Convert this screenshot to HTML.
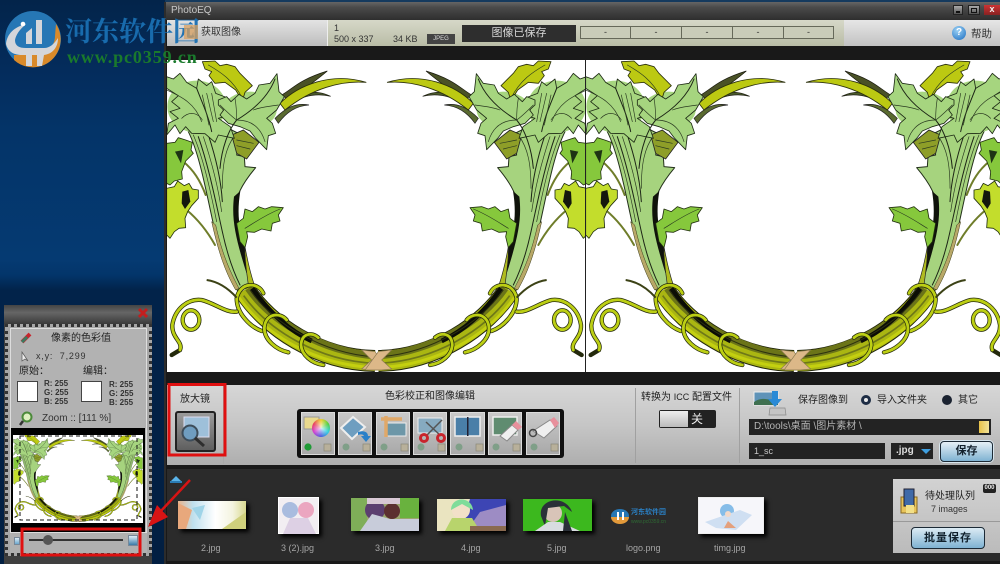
<!DOCTYPE html>
<html><head><meta charset="utf-8">
<style>
html,body{margin:0;padding:0;width:1000px;height:564px;overflow:hidden;background:#04264c;}
body{position:relative;font-family:"Liberation Sans","Noto Sans CJK SC",sans-serif;}
.b{position:absolute;box-sizing:border-box;}
.t{position:absolute;white-space:nowrap;font-size:10px;line-height:14px;color:#222;}
svg{position:absolute;left:0;top:0;}
.lf{fill:#a6d57f;stroke:#1d2a14;stroke-width:2.5;stroke-linejoin:round}
.yl{fill:#bcc912;stroke:#2b300c;stroke-width:2.5;stroke-linejoin:round}
.br{fill:#86c83c;stroke:#22300f;stroke-width:2.5;stroke-linejoin:round}
.lm{fill:#c3dd2c;stroke:#22300f;stroke-width:2.5;stroke-linejoin:round}
.dk{fill:none;stroke:#1c2415;stroke-width:3;stroke-linecap:round}
.vn{fill:none;stroke:#2a3a20;stroke-width:2;stroke-linecap:round}
.tk{fill:none;stroke:#24290c;stroke-width:13;stroke-linecap:round}
.tn{fill:none;stroke:#bccf14;stroke-width:8.5;stroke-linecap:round}
.ol{fill:none;stroke:#6f7d2a;stroke-width:6;stroke-linecap:round}
.tile{position:absolute;background:linear-gradient(#c9c9c9,#a9a9a9);top:412px;height:43px;box-sizing:border-box;border:1px solid #dcdcdc;}
.lb{position:absolute;white-space:nowrap;top:541px;color:#a5a5a5;font-size:9px;line-height:14px;}
</style></head>
<body>
<!-- Desktop -->
<div class="b" style="left:0;top:0;width:165px;height:564px;background:linear-gradient(180deg,#03244a 0,#042c5c 70px,#043468 130px,#053a72 260px,#03356a 275px,#02234a 290px,#021f42 564px);"></div>
<div class="b" style="left:560px;top:0;width:240px;height:2px;background:#777;"></div>
<div class="b" style="left:165px;top:0;width:835px;height:2px;background:#153a5e;"></div>

<!-- Window -->
<div class="b" style="left:164px;top:2px;width:836px;height:562px;background:#191919;border-left:2px solid #2c2c2c;"></div>
<div class="b" style="left:166px;top:2px;width:834px;height:18px;background:linear-gradient(#666 0,#4a4a4a 30%,#2e2e2e 100%);"></div>
<div class="t" style="left:171px;top:4px;color:#c9c9c9;font-size:10px;">PhotoEQ</div>
<div class="b" style="left:953px;top:5px;width:10px;height:10px;background:linear-gradient(#aaa,#555);border:1px solid #222;"></div>
<div class="b" style="left:956px;top:11px;width:4px;height:2px;background:#111;"></div>
<div class="b" style="left:968px;top:5px;width:12px;height:10px;background:linear-gradient(#aaa,#555);border:1px solid #222;"></div>
<div class="b" style="left:971px;top:8px;width:6px;height:5px;border:1px solid #111;"></div>
<div class="b" style="left:984px;top:5px;width:16px;height:10px;background:linear-gradient(#c33,#822);text-align:center;color:#eee;font-size:9px;font-weight:bold;line-height:9px;">x</div>

<!-- Toolbar -->
<div class="b" style="left:167px;top:20px;width:160px;height:26px;background:linear-gradient(#e3e3e3,#bdbdbd);"></div>
<div class="b" style="left:327px;top:20px;width:517px;height:26px;background:linear-gradient(#d6d8c8,#b9bca6);border-left:1px solid #eee;"></div>
<div class="b" style="left:844px;top:20px;width:156px;height:26px;background:linear-gradient(#e6e6e6,#c2c2c2);"></div>
<div class="t" style="left:201px;top:26px;color:#333;">获取图像</div>
<div class="t" style="left:334px;top:21px;font-size:9px;color:#333;">1</div>
<div class="t" style="left:334px;top:32px;font-size:9px;color:#333;">500 x 337</div>
<div class="t" style="left:393px;top:32px;font-size:9px;color:#333;">34 KB</div>
<div class="b" style="left:427px;top:34px;width:28px;height:10px;background:#444;color:#ddd;font-size:6px;line-height:10px;text-align:center;">JPEG</div>
<div class="b" style="left:462px;top:25px;width:114px;height:17px;background:#2e2e2e;color:#d8d8d8;font-size:11px;line-height:16px;text-align:center;">图像已保存</div>
<div class="b" style="left:580px;top:26px;width:51px;height:13px;border:1px solid #66695a;background:#c9ccb9;color:#333;font-size:9px;line-height:10px;text-align:center;">-</div>
<div class="b" style="left:631px;top:26px;width:51px;height:13px;border:1px solid #66695a;border-left:0;background:#c9ccb9;color:#333;font-size:9px;line-height:10px;text-align:center;">-</div>
<div class="b" style="left:682px;top:26px;width:51px;height:13px;border:1px solid #66695a;border-left:0;background:#c9ccb9;color:#333;font-size:9px;line-height:10px;text-align:center;">-</div>
<div class="b" style="left:733px;top:26px;width:51px;height:13px;border:1px solid #66695a;border-left:0;background:#c9ccb9;color:#333;font-size:9px;line-height:10px;text-align:center;">-</div>
<div class="b" style="left:784px;top:26px;width:50px;height:13px;border:1px solid #66695a;border-left:0;background:#c9ccb9;color:#333;font-size:9px;line-height:10px;text-align:center;">-</div>
<div class="b" style="left:952px;top:26px;width:14px;height:14px;border-radius:50%;background:radial-gradient(circle at 40% 30%,#9cd2f5,#1a6cc0);color:#fff;font-size:10px;font-weight:bold;line-height:14px;text-align:center;">?</div>
<div class="t" style="left:971px;top:27px;color:#333;font-size:10.5px;">帮助</div>

<!-- Image area -->
<div class="b" style="left:167px;top:60px;width:833px;height:312px;background:#fff;"></div>

<!-- Control panel -->
<div class="b" style="left:167px;top:385px;width:833px;height:80px;background:linear-gradient(#d6d6d6,#c6c6c6 50%,#aeaeae);"></div>
<div class="b" style="left:223px;top:386px;width:1px;height:78px;background:#aaa;"></div>
<div class="b" style="left:635px;top:388px;width:1px;height:75px;background:#a0a0a0;"></div>
<div class="b" style="left:739px;top:388px;width:1px;height:75px;background:#a0a0a0;"></div>
<div class="t" style="left:180px;top:393px;color:#222;">放大镜</div>
<div class="b" style="left:175px;top:411px;width:41px;height:41px;background:linear-gradient(#9b9b9b,#5f5f5f);border:2px solid #222;border-radius:3px;"></div>
<div class="t" style="left:385px;top:390px;color:#222;">色彩校正和图像编辑</div>

<div class="b" style="left:297px;top:409px;width:267px;height:49px;background:#111;border-radius:3px;"></div>
<div class="tile" style="left:301px;width:34px;"></div>
<div class="tile" style="left:338px;width:34px;"></div>
<div class="tile" style="left:376px;width:34px;"></div>
<div class="tile" style="left:413px;width:34px;"></div>
<div class="tile" style="left:450px;width:35px;"></div>
<div class="tile" style="left:488px;width:34px;"></div>
<div class="tile" style="left:526px;width:34px;"></div>

<div class="t" style="left:641px;top:390px;color:#222;">转换为 <span style="font-size:9px">ICC</span> 配置文件</div>
<div class="b" style="left:659px;top:410px;width:57px;height:18px;background:#222;border-radius:2px;"></div>
<div class="b" style="left:660px;top:411px;width:28px;height:16px;background:linear-gradient(#eee,#bbb);"></div>
<div class="t" style="left:691px;top:412px;color:#eee;font-size:12px;">关</div>

<div class="t" style="left:798px;top:394px;color:#222;">保存图像到</div>
<div class="b" style="left:861px;top:395px;width:10px;height:10px;border-radius:50%;background:#e8e8e8;border:3px solid #1d2c44;"></div>
<div class="t" style="left:877px;top:394px;color:#222;">导入文件夹</div>
<div class="b" style="left:942px;top:395px;width:10px;height:10px;border-radius:50%;background:#1a2230;"></div>
<div class="t" style="left:958px;top:394px;color:#222;">其它</div>
<div class="b" style="left:749px;top:419px;width:242px;height:16px;background:#232323;"></div>
<div class="t" style="left:754px;top:420px;color:#b5b5b5;font-size:10px;">D:\tools\桌面 \图片素材 \</div>
<div class="b" style="left:979px;top:421px;width:10px;height:12px;background:linear-gradient(90deg,#e8c24a,#f3e39a);"></div>
<div class="b" style="left:749px;top:443px;width:136px;height:16px;background:#232323;"></div>
<div class="t" style="left:754px;top:444px;color:#c8c8c8;font-size:9px;">1_sc</div>
<div class="b" style="left:891px;top:443px;width:42px;height:16px;background:#232323;"></div>
<div class="t" style="left:896px;top:444px;color:#ddd;font-size:10px;font-weight:bold;">.jpg</div>
<div class="b" style="left:940px;top:441px;width:53px;height:21px;border-radius:4px;background:linear-gradient(#e6f0f6,#7fb2d2);border:1px solid #1c2a36;color:#12202c;font-size:11px;font-weight:bold;line-height:19px;text-align:center;box-shadow:0 0 0 1px #d8e6ee;">保存</div>

<!-- Thumb strip -->
<div class="b" style="left:167px;top:469px;width:833px;height:92px;background:#2b2b2b;"></div>
<div class="lb" style="left:201px;">2.jpg</div>
<div class="lb" style="left:281px;">3 (2).jpg</div>
<div class="lb" style="left:375px;">3.jpg</div>
<div class="lb" style="left:461px;">4.jpg</div>
<div class="lb" style="left:547px;">5.jpg</div>
<div class="lb" style="left:626px;">logo.png</div>
<div class="lb" style="left:714px;">timg.jpg</div>

<!-- Thumbnails -->
<div class="b" style="left:178px;top:501px;width:68px;height:28px;background:linear-gradient(90deg,#e8b48c 0,#bfe0ee 22%,#fff 55%,#f4f4e0 80%,#d8d890 100%);box-shadow:3px 3px 4px #000;"></div>
<div class="b" style="left:278px;top:497px;width:41px;height:37px;background:#f2eef2;border:1px solid #fff;box-shadow:3px 3px 4px #000;"></div>
<div class="b" style="left:351px;top:498px;width:68px;height:33px;background:#9aa66c;box-shadow:3px 3px 4px #000;"></div>
<div class="b" style="left:437px;top:499px;width:69px;height:32px;background:linear-gradient(#4a6ad0,#a8a0d8);box-shadow:3px 3px 4px #000;"></div>
<div class="b" style="left:523px;top:499px;width:69px;height:32px;background:#3cb81e;box-shadow:3px 3px 4px #000;"></div>
<div class="b" style="left:698px;top:497px;width:66px;height:37px;background:#f6f6fa;border:1px solid #eee;box-shadow:3px 3px 4px #000;"></div>
<div class="t" style="left:631px;top:506px;color:#2b7fc2;font-size:7px;font-weight:bold;">河东软件园</div>
<div class="t" style="left:631px;top:515px;color:#2e6b34;font-size:5px;">www.pc0359.cn</div>

<!-- Queue -->
<div class="b" style="left:893px;top:479px;width:107px;height:74px;background:linear-gradient(#d2d2d2,#bbbbbb);"></div>
<div class="b" style="left:893px;top:521px;width:107px;height:1px;background:#999;"></div>
<div class="b" style="left:983px;top:484px;width:13px;height:9px;background:#222;border-radius:2px;color:#eee;font-size:6px;line-height:9px;text-align:center;font-weight:bold;">000</div>
<div class="t" style="left:925px;top:490px;color:#222;">待处理队列</div>
<div class="t" style="left:931px;top:502px;color:#333;font-size:9px;">7 images</div>
<div class="b" style="left:911px;top:527px;width:74px;height:22px;border-radius:4px;background:linear-gradient(#dcebf4,#7fb2d2);border:1px solid #1c2a36;color:#10202c;font-size:11px;font-weight:bold;line-height:20px;text-align:center;letter-spacing:1px;">批量保存</div>

<!-- Pixel panel -->
<div class="b" style="left:4px;top:305px;width:148px;height:259px;background:#3f3f3f;"></div>
<div class="b" style="left:4px;top:305px;width:148px;height:19px;background:linear-gradient(#444,#666 40%,#3a3a3a);"></div>
<div class="b" style="left:5px;top:324px;width:147px;height:232px;border:3px dotted #333;background:#a6a6a6;"></div>
<div class="b" style="left:10px;top:328px;width:137px;height:205px;background:#b2b2b2;border:1px solid #ddd;"></div>
<div class="t" style="left:51px;top:332px;color:#222;">像素的色彩值</div>
<div class="t" style="left:36px;top:349px;color:#333;font-size:9px;letter-spacing:.8px;">x,y:&nbsp; 7,299</div>
<div class="t" style="left:19px;top:365px;color:#222;">原始：</div>
<div class="t" style="left:83px;top:365px;color:#222;">编辑：</div>
<div class="b" style="left:17px;top:381px;width:21px;height:21px;background:#fff;border:1px solid #444;"></div>
<div class="b" style="left:81px;top:381px;width:21px;height:21px;background:#fff;border:1px solid #444;"></div>
<div class="t" style="left:44px;top:379px;font-size:8px;line-height:9px;font-weight:bold;color:#333;">R: 255<br>G: 255<br>B: 255</div>
<div class="t" style="left:109px;top:380px;font-size:8px;line-height:9px;font-weight:bold;color:#333;">R: 255<br>G: 255<br>B: 255</div>
<div class="t" style="left:42px;top:412px;color:#333;font-size:10px;">Zoom :: [111 %]</div>
<div class="b" style="left:11px;top:428px;width:134px;height:104px;background:#000;"></div>
<div class="b" style="left:13px;top:435px;width:130px;height:88px;background:#fff;"></div>
<div class="b" style="left:10px;top:533px;width:137px;height:20px;background:#b0b0b0;"></div>
<div class="b" style="left:29px;top:539px;width:94px;height:2px;background:#333;"></div>
<div class="b" style="left:43px;top:535px;width:10px;height:10px;border-radius:50%;background:#555;"></div>
<div class="b" style="left:14px;top:537px;width:6px;height:8px;background:linear-gradient(#dfeef8,#6aa6cc);border:1px solid #789;"></div>
<div class="b" style="left:128px;top:535px;width:10px;height:11px;background:linear-gradient(#dfeef8,#3a7ca8);border:1px solid #789;"></div>

<svg width="1000" height="564" viewBox="0 0 1000 564">
<defs>
<clipPath id="c1"><rect x="167" y="60" width="418" height="312"/></clipPath>
<clipPath id="c2"><rect x="586" y="60" width="414" height="312"/></clipPath>
<clipPath id="c3"><rect x="13" y="435" width="130" height="88"/></clipPath>
<g id="half">
<!-- top stems -->
<path d="M330,190 C360,160 390,142 432,150 C395,152 365,170 340,205Z" fill="#5a6a30" stroke="#222" stroke-width="2"/>
<path d="M350,120 C385,100 400,75 487,48 C450,80 420,100 370,135Z" fill="#4a5226" stroke="#1a1a10" stroke-width="2"/>
<path d="M365,130 C400,115 450,100 497,124 C450,112 410,125 375,145Z" fill="#4a5a2a" stroke="#1a1a10" stroke-width="2"/>
<path class="yl" d="M345,145 C400,90 500,50 603,82 C530,76 440,100 360,165Z"/>
<!-- side branches -->
<path class="ol" d="M55,320 C85,345 105,375 122,420"/>
<path class="ol" d="M65,465 C95,490 125,525 150,570"/>
<!-- side leaves -->
<path class="br" d="M5,265 L30,262 L40,248 L62,255 L82,262 L78,285 L85,295 L62,318 L50,350 L52,372 L28,378 L15,390 L5,385Z"/>
<path class="lm" d="M5,400 L28,395 L38,378 L58,392 L72,385 L82,402 L100,405 L100,430 L80,452 L68,470 L60,490 L62,518 L42,520 L28,530 L15,550 L5,540Z"/>
<path d="M52,410 L70,405 L76,440 L60,462 L50,445Z" fill="#14180d"/>
<path d="M30,290 L55,285 L48,325 Z" fill="#1e3414"/>
<!-- stalk -->
<path d="M70,230 C105,300 125,420 148,520 C168,600 190,660 218,708 L265,692 C248,620 208,540 208,470 C210,430 228,390 272,338 L240,335 L238,305 L215,300 L230,240 L150,200Z" fill="#a6d37e" stroke="#23301a" stroke-width="3" stroke-linejoin="round"/>
<path class="vn" d="M85,240 C115,310 135,400 155,500"/>
<path class="dk" d="M100,245 C130,330 150,430 172,530 C185,590 200,640 225,690"/>
<path class="vn" d="M115,245 C140,320 160,400 170,470"/>
<path class="dk" d="M130,240 C150,300 168,370 172,440"/>
<path class="vn" d="M210,240 C180,280 172,330 172,400"/>
<path d="M140,500 C160,590 180,650 212,705 L222,700 C190,640 170,590 152,510Z" fill="#b8a868" stroke="#3a3a18" stroke-width="1.5"/>
<path d="M207,425 C198,500 215,560 250,672 L240,570 C224,530 214,480 226,408Z" fill="#10130b"/>
<path d="M240,575 C248,620 258,660 268,690 L250,690 C245,650 238,610 240,575Z" fill="#b0bc20" stroke="#222" stroke-width="2"/>
<!-- small bright leaf -->
<path class="br" d="M215,505 L235,490 L240,462 L262,470 L280,455 L300,462 L320,455 L355,458 L340,480 L345,498 L322,505 L318,528 L290,522 L268,532 L245,530 L248,545 L240,578 L225,560Z"/>
<path class="vn" d="M240,520 C265,505 300,480 345,462"/>
<!-- olive hatch -->
<path d="M200,240 L235,225 L282,262 L245,312 L215,295Z" fill="#8e9e28" stroke="#222" stroke-width="2.5"/>
<path class="vn" d="M215,255 L265,265 M215,272 L255,282"/>
<!-- solid mass behind the leaves -->
<ellipse cx="95" cy="155" rx="88" ry="78" fill="#a6d57f"/>
<ellipse cx="255" cy="165" rx="80" ry="55" fill="#a6d57f"/>
<!-- big leaf -->
<path class="lf" d="M5,65 L25,72 L45,55 L65,82 L95,100 L100,72 L125,92 L140,80 L152,115 L186,128 L172,150 L178,185 L160,190 L196,215 L208,250 L160,240 L150,262 L120,236 L80,235 L62,215 L45,236 L30,210 L5,240 L10,205 L40,190 L15,170 L45,160 L20,140 L40,122 L5,100Z"/>
<path class="vn" d="M5,105 C50,125 90,145 110,200"/>
<path class="vn" d="M50,190 C75,165 100,175 112,195"/>
<path class="dk" d="M95,100 C110,140 130,180 140,230"/>
<path class="vn" d="M112,120 L132,210 M125,115 L145,200 M140,115 L155,200"/>
<!-- yellow leaf -->
<path class="yl" d="M112,20 L150,18 L165,32 L185,28 L210,35 L225,55 L240,70 L262,92 L240,112 L232,138 L212,105 L180,82 L150,85 L132,62 L140,50 L120,42Z"/>
<path class="vn" d="M130,30 C165,50 205,75 232,130"/>
<!-- right leaf -->
<path class="lf" d="M160,135 L185,125 L198,140 L222,118 L245,132 L270,115 L282,90 L315,85 L336,56 L342,110 L358,125 L335,165 L305,190 L322,205 L332,235 L310,242 L305,284 L272,250 L255,228 L225,215 L190,205 L165,180 L176,165 L160,150Z"/>
<path class="dk" d="M330,72 C310,125 265,165 215,195 C190,225 170,280 165,340"/>
<path class="vn" d="M215,195 C250,195 285,210 300,260"/>
<path class="vn" d="M210,130 C215,160 215,180 215,195 M165,150 C185,170 200,185 215,195 M340,150 C310,155 290,155 265,165"/>
<!-- band -->
<path d="M238,705 C310,815 460,915 630,918" fill="none" stroke="#20240c" stroke-width="66"/>
<path d="M238,705 C310,815 460,915 630,918" fill="none" stroke="#aab612" stroke-width="60"/>
<path d="M250,700 C320,800 470,890 630,902" fill="none" stroke="#6b7418" stroke-width="22"/>
<path d="M262,700 C325,790 390,835 440,858" fill="none" stroke="#0b0d06" stroke-width="14"/>
<path d="M255,705 C325,805 470,895 630,906" fill="none" stroke="#2c3010" stroke-width="3"/>
<path d="M236,722 C310,825 460,918 630,925" fill="none" stroke="#6e7818" stroke-width="5"/>
<path d="M222,728 C300,840 450,930 630,938" fill="none" stroke="#c4d010" stroke-width="9"/>
<!-- rings -->
<path class="tk" d="M295,715 C280,680 225,680 215,730 C215,775 255,815 290,828"/>
<path class="tn" d="M295,715 C280,680 225,680 215,730 C215,775 255,815 290,828"/>
<path class="tk" d="M365,795 C345,770 300,775 298,820 C298,855 335,885 370,892"/>
<path class="tn" d="M365,795 C345,770 300,775 298,820 C298,855 335,885 370,892"/>
<path class="tk" d="M460,848 C440,830 410,835 408,870 C410,900 440,925 475,930"/>
<path class="tn" d="M460,848 C440,830 410,835 408,870 C410,900 440,925 475,930"/>
<!-- tendrils -->
<path class="tk" d="M215,770 C185,775 150,745 110,735 C70,730 30,760 22,810 C20,850 55,860 45,885 L20,900"/>
<path class="tn" d="M215,770 C185,775 150,745 110,735 C70,730 30,760 22,810 C20,850 55,860 45,885" />
<ellipse class="tk" cx="78" cy="795" rx="25" ry="29"/>
<ellipse class="tn" cx="78" cy="795" rx="25" ry="29"/>
<path d="M125,675 C160,680 190,700 215,728" fill="none" stroke="#3c4216" stroke-width="6"/>
<!-- ribbon -->
<path d="M590,885 L630,890 L670,945 L620,945 L590,942 L620,915Z" fill="#dcb888" stroke="#8a7a50" stroke-width="2"/>
</g>
<g id="wreath"><use href="#half"/><use href="#half" transform="translate(1270,0) scale(-1,1)"/></g>
</defs>

<g clip-path="url(#c1)"><use href="#wreath" transform="translate(165,55) scale(.33333)"/></g>
<g clip-path="url(#c2)"><use href="#wreath" transform="translate(584,55) scale(.33333)"/></g>
<rect x="585" y="60" width="1" height="312" fill="#222"/>
<g clip-path="url(#c3)"><use href="#wreath" transform="translate(13,433) scale(.1024,.0935)"/></g>
<rect x="20" y="436" width="117" height="84" fill="none" stroke="#111" stroke-width="1" stroke-dasharray="4 3"/>

<!-- Watermark logo -->
<circle cx="33" cy="39" r="28" fill="#2677b5"/>
<path d="M56,24 A28,28 0 0 1 44,65 L44,52 C50,50 55,44 55,36Z" fill="#d98a2a"/>
<path d="M14,60 A28,28 0 0 0 44,65 L44,55 L14,55Z" fill="#d98a2a"/>
<path d="M6,44 C7,34 14,27 26,24 C19,30 16,35 15,40 C15,46 19,48 26,48 L44,48 C50,48 54,44 58,38 C58,48 52,54 44,55 L42,66 L37,66 L37,55 L32,55 L32,66 L26,66 L26,55 L22,55 C14,55 8,52 6,44Z" fill="#d4d6da"/>
<path d="M26,33 L32,28 L32,44 L26,44Z M36,20 L42,20 L42,44 L36,44Z" fill="#d4d6da"/>
<circle cx="23" cy="24" r="2.3" fill="#fff"/>
<text x="65" y="41" font-family="'Liberation Serif','Noto Serif CJK SC',serif" font-size="27" font-weight="700" fill="#1a6fb2" opacity=".95">河东软件园</text>
<text x="67" y="63" font-family="'Liberation Serif',serif" font-size="18" font-weight="700" fill="#1a7a2c" letter-spacing=".9">www.pc0359.cn</text>
<rect x="184" y="25" width="14" height="14" fill="#d8a060" opacity=".75"/>

<!-- Magnifier button -->
<rect x="184" y="417" width="25" height="20" fill="#9ec0da" stroke="#dde" stroke-width="1"/>
<circle cx="190" cy="433" r="7.5" fill="#6f9dc0" stroke="#3e4d5a" stroke-width="2"/>
<path d="M195,438 L204,446" stroke="#2e2e2e" stroke-width="3"/>

<!-- Tool icons -->
<rect x="304" y="417" width="15" height="12" fill="#e9d98e" stroke="#999"/>
<path d="M341,428 L353,417 L365,427 L352,439Z" fill="#6e9ec0" stroke="#eee" stroke-width="2"/>
<path d="M358,432 C364,430 368,432 368,436 L371,436 L366,442 L361,436 L364,436 C363,434 361,434 358,435Z" fill="#2a80c8"/>
<rect x="385" y="423" width="21" height="13" fill="#6d97a8" stroke="#eee"/>
<path d="M381,419 L402,419 M386,416 L386,437" stroke="#e0a868" stroke-width="3.5" fill="none"/>
<rect x="418" y="418" width="24" height="15" fill="#86aac0" stroke="#eee"/>
<path d="M426,422 L441,436 M442,420 L426,436" stroke="#555" stroke-width="1.5"/>
<circle cx="424" cy="438" r="3.5" fill="none" stroke="#c8242c" stroke-width="3"/><circle cx="441" cy="438" r="3.5" fill="none" stroke="#c8242c" stroke-width="3"/>
<rect x="455" y="417" width="25" height="19" fill="#4a7fa8" stroke="#eee" stroke-width="1.5"/><rect x="467" y="417" width="1.5" height="19" fill="#223"/>
<rect x="493" y="417" width="24" height="18" fill="#5f8c70" stroke="#eee" stroke-width="1.5"/>
<path d="M500,436 L512,425 L518,430 L507,441Z" fill="#f0f0f0" stroke="#888"/><path d="M512,425 L516,421 L522,427 L518,430Z" fill="#e8909c"/>
<path d="M533,431 L550,420 L557,426 L544,438Z" fill="#efefef" stroke="#888"/><path d="M550,420 L554,417 L559,423 L555,428Z" fill="#e8909c"/>
<circle cx="533" cy="433" r="3.5" fill="none" stroke="#444" stroke-width="1.5"/>
<circle cx="308" cy="447" r="3.6" fill="#1f9a36"/>
<g fill="#7f9f88"><circle cx="346" cy="447" r="3.5"/><circle cx="384" cy="447" r="3.5"/><circle cx="421" cy="447" r="3.5"/><circle cx="459" cy="447" r="3.5"/><circle cx="496" cy="447" r="3.5"/><circle cx="534" cy="447" r="3.5"/></g>
<g fill="#b8b09a" stroke="#8a8878" stroke-width=".7"><rect x="324" y="444" width="7" height="7"/><rect x="363" y="444" width="7" height="7"/><rect x="401" y="444" width="7" height="7"/><rect x="438" y="444" width="7" height="7"/><rect x="476" y="444" width="7" height="7"/><rect x="513" y="444" width="7" height="7"/><rect x="551" y="444" width="7" height="7"/></g>

<!-- Save icon -->
<rect x="754" y="392" width="24" height="13" fill="#5f93b8" stroke="#eee"/>
<path d="M754,402 C762,396 770,400 778,402 L778,405 L754,405Z" fill="#3f7050"/>
<path d="M772,391 L778,391 L778,399 L782,399 L775,407 L768,399 L772,399Z" fill="#2a8ad6"/>
<path d="M770,408 L785,408 L786,415 L769,415Z" fill="#c4c4c4" stroke="#888" stroke-width=".7"/>
<path d="M921,449 L931,449 L926,454Z" fill="#3f9fe0"/>
<path d="M171,481 L176,476 L181,481Z" fill="#5ab4ea"/><rect x="170" y="481" width="12" height="2" fill="#2a7cb4"/>

<!-- Dropper / pointer / magnifier in pixel panel -->
<path d="M22,342 L30,334" stroke="#c8242c" stroke-width="4"/><path d="M22,342 L27,337" stroke="#3a7a60" stroke-width="3"/>
<path d="M22,352 L22,361 L25,359 L28,361 Z" fill="#eee" stroke="#555" stroke-width=".7"/>
<circle cx="27" cy="417" r="4.5" fill="#dff0c0" stroke="#4c8a3a" stroke-width="2"/><path d="M23,421 L20,425" stroke="#333" stroke-width="2.5"/>
<path d="M139,309 l8,8 m0,-8 l-8,8" stroke="#c21e1e" stroke-width="3"/>

<!-- Logo in strip -->
<ellipse cx="620" cy="516" rx="9" ry="7" fill="#2677b5"/><path d="M611,517 A9,7 0 0 0 629,517Z" fill="#e39a3a"/><rect x="617" y="512" width="2" height="8" fill="#fff"/><rect x="622" y="512" width="2" height="8" fill="#fff"/>

<!-- Thumb details -->
<g>
<path d="M178,529 L178,503 L192,510 L186,529Z" fill="#e8a87c"/><path d="M192,508 L205,505 L200,520Z" fill="#9fd4e8"/><path d="M222,529 L246,512 L246,529Z" fill="#cfd07c"/>
<circle cx="290" cy="510" r="8" fill="#a9bcdf"/><circle cx="306" cy="510" r="8" fill="#eba6c0"/><path d="M283,534 L290,518 L308,518 L316,534Z" fill="#ddd0e4"/>
<rect x="351" y="498" width="16" height="33" fill="#7fae58"/><rect x="400" y="498" width="19" height="20" fill="#69b23e"/>
<circle cx="375" cy="510" r="10" fill="#5c3f70"/><circle cx="392" cy="511" r="8" fill="#5c3030"/><path d="M360,531 L372,514 L390,519 L419,519 L419,531Z" fill="#c8ccda"/>
<rect x="367" y="498" width="33" height="6" fill="#d8c8d4"/>
<path d="M437,499 L470,499 L460,531 L437,531Z" fill="#eae4c0"/><path d="M470,499 L506,499 L506,520 L465,522Z" fill="#3d45b4"/><path d="M480,512 L506,505 L506,526 L470,526Z" fill="#9d8cc4"/>
<circle cx="461" cy="510" r="9" fill="#f2e0c8"/><path d="M451,510 C451,496 472,496 473,510 L462,504Z" fill="#7fdc9a"/><path d="M445,531 L452,518 L472,518 L480,531Z" fill="#b8d46c"/><rect x="470" y="526" width="36" height="5" fill="#8a6a50"/>
<circle cx="553" cy="513" r="9" fill="#d8c4b8"/><path d="M541,516 C538,498 566,494 572,512 L564,506 L548,508 L545,526Z" fill="#2a3038"/><path d="M535,531 L548,522 L560,522 L580,531Z" fill="#d8dce0"/><path d="M565,512 L572,531 L563,531Z" fill="#2a3038"/>
<circle cx="727" cy="511" r="7" fill="#86bde8"/><path d="M705,522 L740,510 L752,515 L736,530 L716,528Z" fill="#cfdff2"/><circle cx="728" cy="514" r="3" fill="#f2d8c8"/><path d="M728,521 L736,528 L724,528Z" fill="#e4a07c"/>
</g>

<!-- Queue icon -->
<path d="M901,497 L917,497 L917,513 L901,513Z" fill="#e8c45a" stroke="#8a6a20"/>
<rect x="904" y="489" width="10" height="17" fill="#3f6aa8" stroke="#223"/>
<rect x="906" y="505" width="8" height="8" fill="#f2e088"/>

<!-- Red annotations -->
<rect x="169" y="384.5" width="56" height="70.5" fill="none" stroke="#e01010" stroke-width="3"/>
<rect x="22" y="529" width="118" height="26" fill="none" stroke="#e01010" stroke-width="3"/>
<path d="M190,480 L160,512" stroke="#d81414" stroke-width="2.5"/>
<path d="M148,527 L168,517 L157,505Z" fill="#d81414"/>
</svg>
<div class="b" style="left:312px;top:419px;width:18px;height:18px;border-radius:50%;background:radial-gradient(circle,#ffffffcc 0,#ffffff00 65%),conic-gradient(#f0d030,#50d040,#30d0e0,#5060e0,#d040d0,#e84060,#f0d030);"></div>
</body></html>
